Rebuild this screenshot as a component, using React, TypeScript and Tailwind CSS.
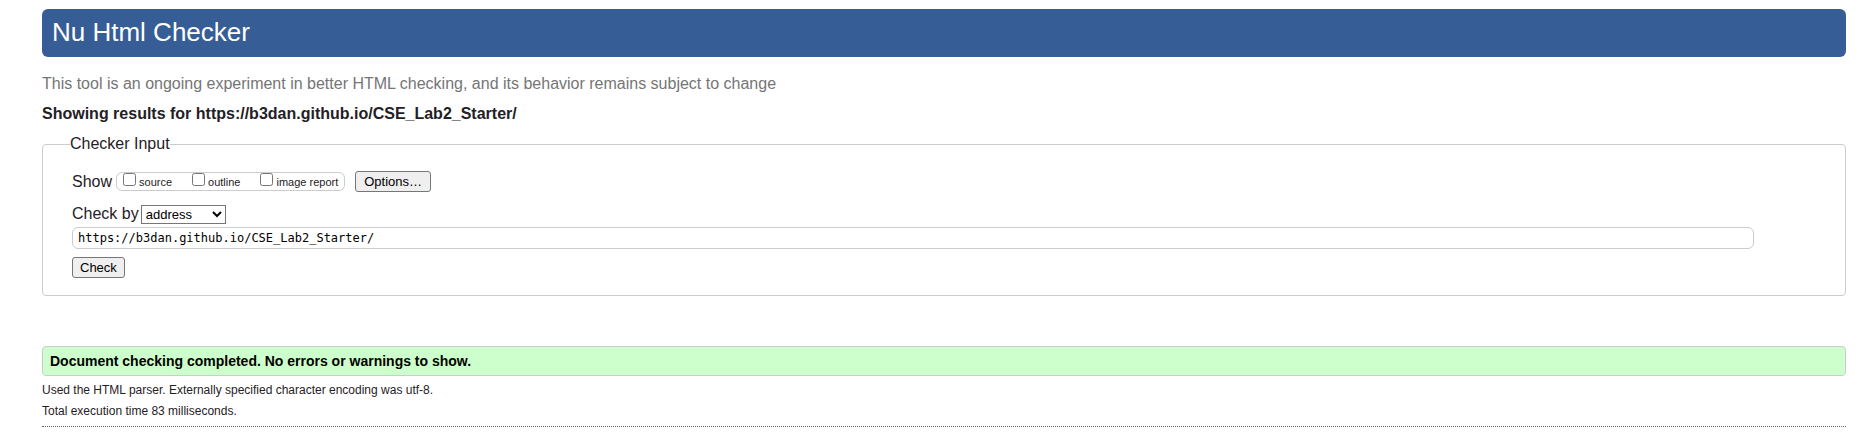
import React from "react";

const views = ["source", "outline", "image report"];

const buttonClass =
  "h-[21px] rounded-[3px] border border-[#767676] bg-[#efefef] text-[13px] leading-4 text-black";

export default function App() {
  return (
    <div className="bg-white pt-[9px] pr-5 pb-4 pl-[42px] font-['Liberation_Sans',Arial,sans-serif] text-base text-[#1f2126]">
      <header>
        <h1 className="rounded-md bg-[#365d95] px-2.5 pt-[9px] pb-[11px] text-[26px] leading-7 text-white">
          Nu Html Checker
        </h1>
        <p className="mt-[17px] leading-5 text-[#757575]">
          This tool is an ongoing experiment in better HTML checking, and its behavior remains
          subject to change
        </p>
      </header>

      <main>
        <h2 className="mt-2.5 leading-5 font-bold">
          Showing results for https://b3dan.github.io/CSE_Lab2_Starter/
        </h2>

        <form onSubmit={(e) => e.preventDefault()}>
          <fieldset className="mt-2.5 rounded-[4px] border border-[#cccccc] pr-[91px] pb-[17px] pl-[29px]">
            <legend className="-ml-0.5 leading-5">Checker Input</legend>

            <div className="mt-[17px] flex items-center">
              <span className="leading-5">Show</span>
              <div className="ml-1 flex h-[19px] items-center gap-5 rounded-md border border-[#cccccc] px-1.5">
                {views.map((view) => (
                  <label key={view} className="flex items-center gap-[3px] text-[11px] leading-4">
                    <input type="checkbox" className="mb-1 size-[13px]" />
                    {view}
                  </label>
                ))}
              </div>
              <button type="button" className={`${buttonClass} ml-2.5 px-2`}>
                Options…
              </button>
            </div>

            <div className="mt-3 flex items-center">
              <label htmlFor="method" className="leading-5">
                Check by
              </label>
              <select
                id="method"
                className="ml-0.5 h-[19px] w-[85px] border border-[#767676] bg-white text-[13px] leading-4 text-black"
              >
                <option>address</option>
                <option>file upload</option>
                <option>text input</option>
              </select>
            </div>

            <input
              type="url"
              aria-label="Address"
              defaultValue="https://b3dan.github.io/CSE_Lab2_Starter/"
              className="mt-[3px] block h-[22px] w-full rounded-md border border-[#cccccc] bg-white px-[5px] font-['DejaVu_Sans_Mono',monospace] text-xs text-black"
            />

            <button type="submit" className={`${buttonClass} mt-2 block px-[7px]`}>
              Check
            </button>
          </fieldset>
        </form>

        <section>
          <p className="mt-[50px] rounded-[4px] border border-[#cccccc] bg-[#ccffcc] px-[7px] py-1 text-sm leading-5 font-bold text-black">
            Document checking completed. No errors or warnings to show.
          </p>
          <p className="mt-1 text-xs leading-5">
            Used the HTML parser. Externally specified character encoding was utf-8.
          </p>
          <p className="mt-px text-xs leading-5">Total execution time 83 milliseconds.</p>
        </section>
      </main>

      <hr className="mt-[5px] border-t border-dotted border-[#666666]" />
    </div>
  );
}
